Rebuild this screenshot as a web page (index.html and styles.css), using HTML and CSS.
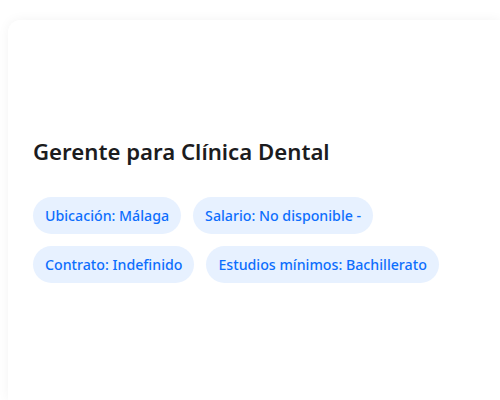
FILE: index.html
```html
<!DOCTYPE html>
<html lang="es">
<head>
<meta charset="utf-8">
<link rel="stylesheet" href="styles.css">
</head>
<body>
<div class="card">
  <div class="media"></div>
  <h1 class="title">Gerente para Clínica Dental</h1>
  <div class="tags">
    <span class="tag">Ubicación: Málaga</span>
    <span class="tag">Salario: No disponible -</span>
    <span class="tag">Contrato: Indefinido</span>
    <span class="tag">Estudios mínimos: Bachillerato</span>
  </div>
</div>
</body>
</html>
```
FILE: styles.css
```css
html, body {
  margin: 0;
  background: #ffffff;
  overflow: hidden;
}
body {
  padding: 20px 0 0 8px;
  height: 400px;
  box-sizing: border-box;
  font-family: "Noto Sans", "Open Sans", sans-serif;
}
.card {
  width: 492px;
  height: 380px;
  box-sizing: border-box;
  padding: 0 25px;
  background: #ffffff;
  border-radius: 12px 0 0 0;
  box-shadow: 0 0 12px rgba(0, 0, 0, 0.05);
  clip-path: inset(-20px 0 0 -20px);
}
.media {
  height: 117px;
}
.title {
  margin: 0;
  font-size: 22.2px;
  font-weight: 600;
  color: #1c1c1e;
  line-height: 30px;
}
.tags {
  margin-top: 30px;
  display: flex;
  flex-wrap: wrap;
  gap: 12px;
  width: 420px;
}
.tag {
  display: inline-flex;
  align-items: center;
  height: 37px;
  padding: 0 12px;
  border-radius: 19px;
  background: #e7f1ff;
  color: #0d6efd;
  font-size: 14.2px;
  font-weight: 500;
}
```
